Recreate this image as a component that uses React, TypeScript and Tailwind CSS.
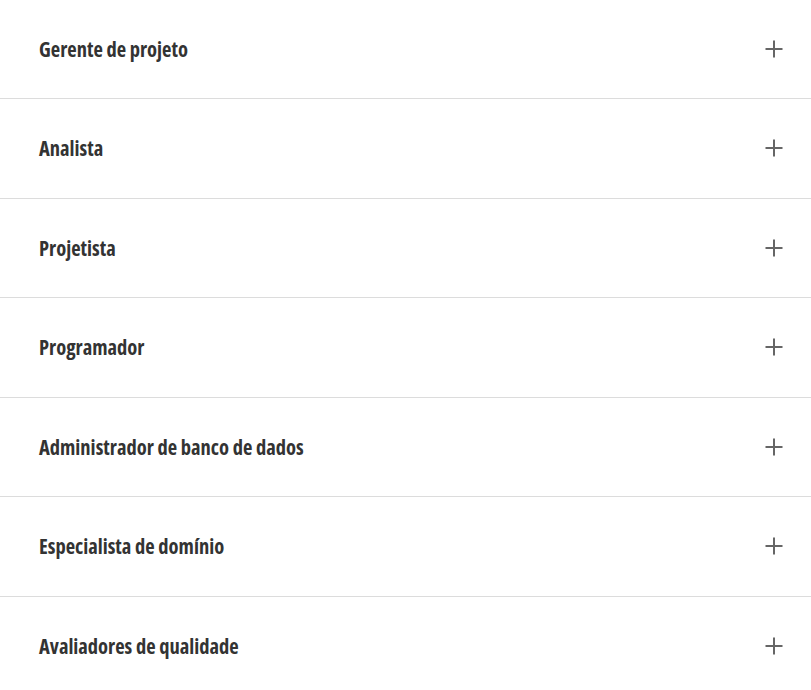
import React from "react";

const items = [
  "Gerente de projeto",
  "Analista",
  "Projetista",
  "Programador",
  "Administrador de banco de dados",
  "Especialista de domínio",
  "Avaliadores de qualidade",
];

export default function App() {
  return (
    <div className="w-[811px] bg-white -mt-[0.5px]">
      {items.map((t, i) => (
        <div
          key={t}
          className={`flex h-[99.5px] items-center justify-between pl-[39px] pr-[28px] ${
            i < items.length - 1 ? "border-b border-[#dcdcdc]" : ""
          }`}
        >
          <span
            className="text-[20.5px] leading-[28px] font-bold text-[#333333] font-stretch-condensed"
            style={{ fontFamily: '"Open Sans", sans-serif' }}
          >
            {t}
          </span>
          <svg width="18" height="18" viewBox="0 0 18 18" className="text-[#666666]">
            <path d="M9 0.5v17M0.5 9h17" stroke="currentColor" strokeWidth="2" />
          </svg>
        </div>
      ))}
    </div>
  );
}
